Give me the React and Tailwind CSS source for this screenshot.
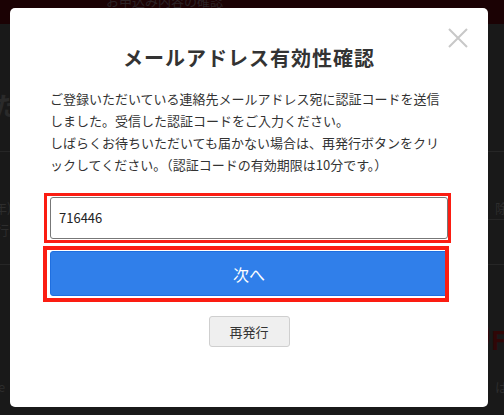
export default function App() {
  const font = { fontFamily: '"Noto Sans CJK JP", "Noto Sans", sans-serif' };
  return (
    <div
      className="relative w-[504px] h-[415px] overflow-hidden bg-[#191919] text-[#2d2d2d]"
      style={font}
    >
      {/* page behind the overlay */}
      <div className="flex flex-col h-full">
        <div className="h-[24px] bg-[#1b0204] flex items-start">
          <span className="ml-[106px] -mt-[9px] text-[13px] text-[#2c2326]">お申込み内容の確認</span>
        </div>
        <div className="h-[128px] flex items-center pt-[34px] border-b border-[#262626]">
          <span className="-ml-[6px] text-[26px] font-bold text-[#2a2a2a]">だ</span>
        </div>
        <div className="h-[113px] flex justify-between border-b border-[#262626]">
          <div className="flex flex-col pt-[45px] text-[13px] leading-[22px]">
            <span className="-ml-[6px]">年)</span>
            <span className="-ml-[4px]">行</span>
          </div>
          <div className="h-[68px] w-[30px] flex items-end justify-end pb-[2px] border-b border-[#262626]">
            <span className="-mr-[4px] text-[13px]">除</span>
          </div>
        </div>
        <div className="h-[112px] flex items-center justify-end pt-[24px]">
          <span className="-mr-[2px] text-[40px] font-bold text-[#300707]">0<span className="text-[26px]">F</span></span>
        </div>
        <div className="flex justify-between text-[13px]">
          <span className="-ml-[2px]">e</span>
          <span className="-mr-[4px]">は</span>
        </div>
      </div>

      {/* modal */}
      <div className="absolute left-[10px] top-[8px] w-[478px] rounded-[5px] bg-white px-10 pt-[35px] pb-[60px]">
        <button className="absolute top-[20px] right-[20px] w-[20px] h-[20px]">
          <svg width="20" height="20" viewBox="0 0 20 20">
            <path d="M1 1 L19 19 M19 1 L1 19" stroke="#c8c8c8" strokeWidth="2" fill="none" />
          </svg>
        </button>

        <h2 className="h-[30px] leading-[30px] text-center text-[20px] font-bold tracking-[1px] text-[#333]">
          メールアドレス有効性確認
        </h2>

        <p className="mt-[15px] text-[13px] leading-[22px] text-[#333]">
          ご登録いただいている連絡先メールアドレス宛に認証コードを送信しました。受信した認証コードをご入力ください。
          <br />
          しばらくお待ちいただいても届かない場合は、再発行ボタンをクリックしてください。（認証コードの有効期限は10分です。）
        </p>

        <div className="mt-[21px] h-[42px] rounded-[3px] border border-[#777] flex items-center px-2 text-[13px] text-[#222]">
          716446
        </div>

        <button className="mt-[12px] w-full h-[45px] rounded-[3px] border border-[#1f6fe0] bg-[#307fea] text-white text-[16px]">
          次へ
        </button>

        <div className="mt-[20px] flex justify-center">
          <button className="w-[81px] h-[31px] rounded-[3px] border border-[#cfcfcf] bg-[#efefef] text-[13px] text-[#333]">
            再発行
          </button>
        </div>

        {/* red annotation boxes */}
        <div className="absolute left-[34px] top-[185px] w-[407px] h-[50px] border-[3px] border-[#fb1d12]" />
        <div className="absolute left-[33px] top-[238px] w-[406px] h-[56px] border-4 border-[#fb1d12]" />
      </div>
    </div>
  );
}
